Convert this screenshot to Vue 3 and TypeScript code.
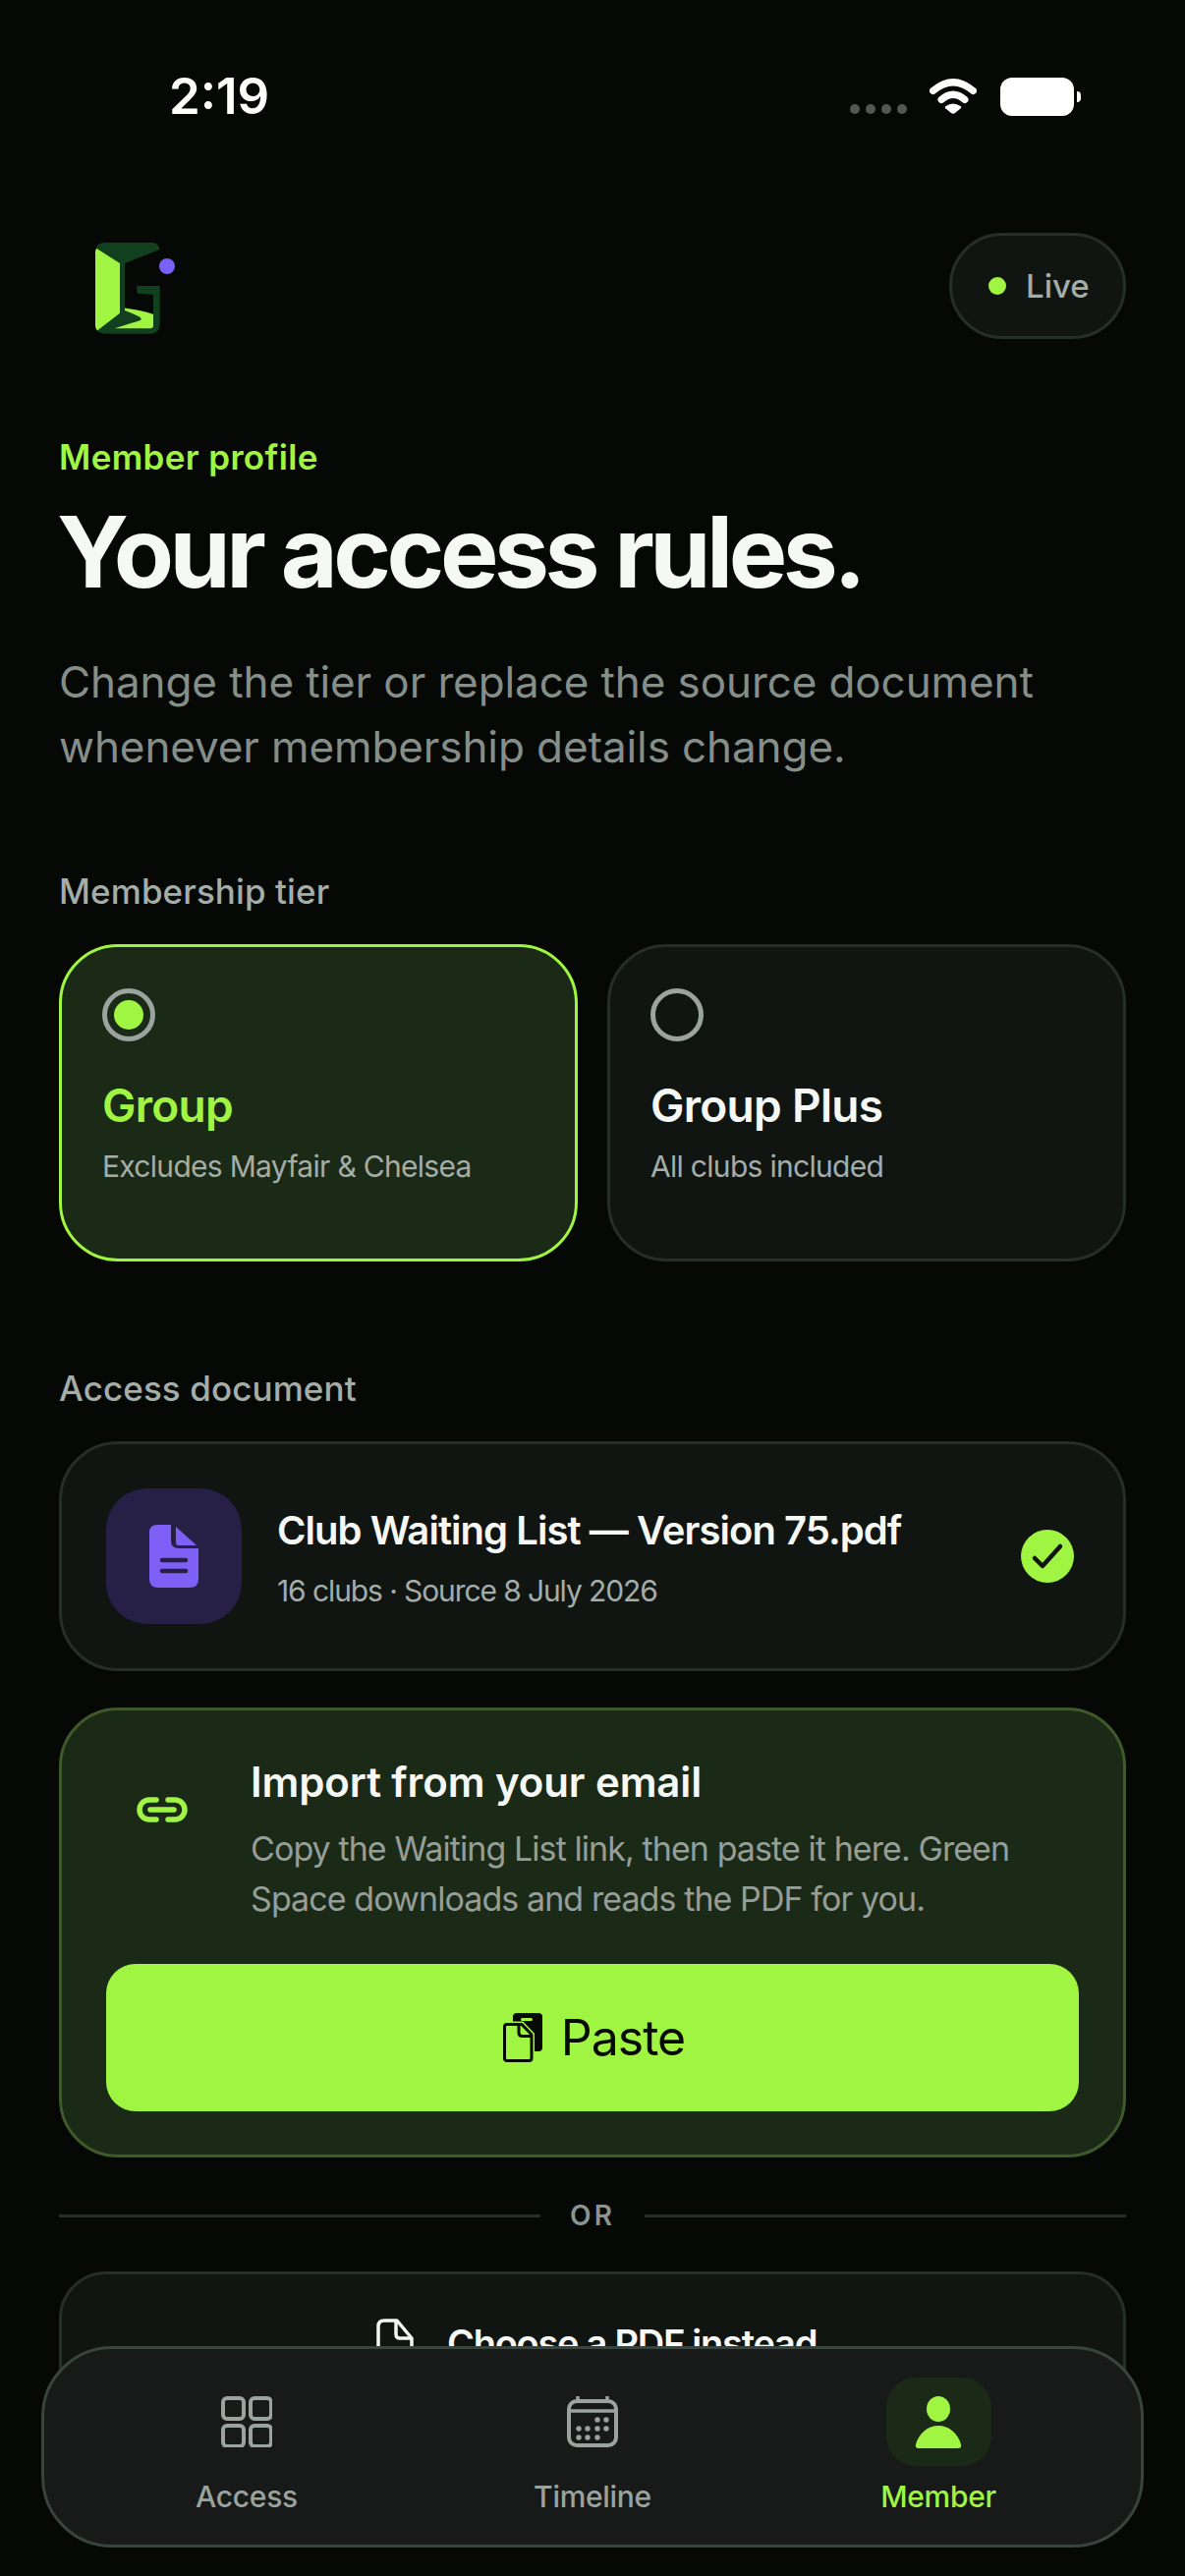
<script setup lang="ts">
const tiers: { name: string; note: string; active: boolean }[] = [
  { name: 'Group', note: 'Excludes Mayfair & Chelsea', active: true },
  { name: 'Group Plus', note: 'All clubs included', active: false },
]
const signalDots: number[] = [1, 2, 3, 4]
const calendarDots: [number, number][] = [
  [31, 24], [40, 24],
  [12, 33], [21, 33], [31, 33], [40, 33],
  [12, 42], [21, 42], [31, 42],
]
</script>

<template>
  <div class="page">
    <main class="content">
      <div class="status">
        <span class="time">2:19</span>
        <div class="status-right">
          <div class="signal"><i v-for="d in signalDots" :key="d"></i></div>
          <svg class="wifi" width="48" height="37" viewBox="0 0 48 37">
            <path d="M3.5 13.5Q24-4 44.500 13.500" fill="none" stroke="#fff" stroke-width="7" stroke-linecap="round" />
            <path d="M12 22.500Q24 12 36 22.500" fill="none" stroke="#fff" stroke-width="7" stroke-linecap="round" />
            <path d="M22 36L16.500 31.500Q15 30 16.500 29Q24 24 31.500 29Q33 30 31.500 31.500L26 36Q24 37.500 22 36Z" fill="#fff" />
          </svg>
          <div class="battery"><b></b></div>
        </div>
      </div>

      <header class="brand-row">
        <svg class="logo" width="82" height="93" viewBox="0 0 82 93">
          <path d="M10 0H58Q64 0 65.700 7L30 21V66L59 72V53L42.300 51.500V44H65.700V83Q65.700 92.700 56 92.700H10Q0 92.700 0 83V10Q0 0 10 0Z" fill="#12401f" />
          <path d="M1.500 6L25 21V71.700L2 89.500Q0 88 0 84V9Q0 7 1.500 6Z" fill="#a0f542" />
          <path d="M30 66.700Q45 68 59 73V84Q59 87.300 56 87.300H19.700Q36 82 46 79Q48 77 44 75Q38 72 30 69Z" fill="#a0f542" />
          <circle cx="73" cy="24" r="8" fill="#7c5ff5" />
        </svg>
        <div class="live"><i></i><span>Live</span></div>
      </header>

      <p class="eyebrow">Member profile</p>
      <h1 class="title">Your access rules.</h1>
      <p class="lede">Change the tier or replace the source document<br />whenever membership details change.</p>

      <p class="label tier-label">Membership tier</p>
      <div class="tiers">
        <div v-for="t in tiers" :key="t.name" class="tier" :class="{ on: t.active }">
          <span class="radio"><i v-if="t.active"></i></span>
          <strong>{{ t.name }}</strong>
          <small>{{ t.note }}</small>
        </div>
      </div>

      <p class="label doc-label">Access document</p>
      <div class="doc">
        <div class="doc-tile">
          <svg width="50" height="64" viewBox="0 0 50 64">
            <path d="M8 0H22V16Q22 24 30 24H50V55Q50 64 41 64H9Q0 64 0 55V8Q0 0 8 0Z" fill="#7f60f7" />
            <path d="M27 2L48 21H30Q27 21 27 18Z" fill="#7f60f7" />
            <path d="M13 36H37M13 47H37" stroke="#262047" stroke-width="4.500" stroke-linecap="round" />
          </svg>
        </div>
        <div class="doc-text">
          <strong>Club Waiting List — Version 75.pdf</strong>
          <small>16 clubs · Source 8 July 2026</small>
        </div>
        <svg class="check" width="54" height="54" viewBox="0 0 54 54">
          <circle cx="27" cy="27" r="27" fill="#a0f542" />
          <path d="M14 29L22 37L40 17" fill="none" stroke="#10150f" stroke-width="4.500" stroke-linecap="round" stroke-linejoin="round" />
        </svg>
      </div>

      <section class="import">
        <div class="import-top">
          <svg class="link" width="52" height="26" viewBox="0 0 52 26">
            <path d="M20 3H13A10 10 0 0 0 13 23H20M32 3H39A10 10 0 0 1 39 23H32" fill="none" stroke="#a0f542" stroke-width="5.500" stroke-linecap="round" />
            <path d="M14 13H38" stroke="#a0f542" stroke-width="5.500" stroke-linecap="round" />
          </svg>
          <div>
            <h2>Import from your email</h2>
            <p>Copy the Waiting List link, then paste it here. Green<br />Space downloads and reads the PDF for you.</p>
          </div>
        </div>
        <button class="paste" type="button">
          <svg width="40" height="50" viewBox="0 0 40 50">
            <rect x="10" y="0" width="30" height="39" rx="4" fill="#060a04" />
            <rect x="18" y="5" width="12" height="3" rx="1.500" fill="#a0f542" />
            <path d="M4 11.500H19L29 22V46Q29 48.500 26.500 48.500H4Q1.500 48.500 1.500 46V14Q1.500 11.500 4 11.500Z" fill="#a0f542" stroke="#a0f542" stroke-width="6" />
            <path d="M4 11.500H19L29 22V46Q29 48.500 26.500 48.500H4Q1.500 48.500 1.500 46V14Q1.500 11.500 4 11.500Z" fill="#a0f542" stroke="#060a04" stroke-width="3" stroke-linejoin="round" />
            <path d="M16 11.500V20Q16 23.500 19.500 23.500H29" fill="none" stroke="#060a04" stroke-width="3" />
          </svg>
          <span>Paste</span>
        </button>
      </section>

      <div class="or"><i></i><span>OR</span><i></i></div>

      <button class="choose" type="button">
        <svg width="38" height="50" viewBox="0 0 38 50">
          <path d="M8 2H21L36 20V42Q36 48 30 48H8Q2 48 2 42V8Q2 2 8 2Z" fill="none" stroke="#f4f6f3" stroke-width="3.500" stroke-linejoin="round" />
          <path d="M20 2V16Q20 20 24 20H36" fill="none" stroke="#f4f6f3" stroke-width="3.500" />
        </svg>
        <span>Choose a PDF instead</span>
      </button>
    </main>

    <nav class="tabbar">
      <div class="tab">
        <span class="tab-icon">
          <svg width="52" height="52" viewBox="0 0 52 52" fill="none" stroke="#9aa39e" stroke-width="4">
            <rect x="2" y="2" width="21" height="21" rx="4" />
            <rect x="30" y="2" width="21" height="21" rx="4" />
            <rect x="2" y="30" width="21" height="21" rx="4" />
            <rect x="30" y="30" width="21" height="21" rx="4" />
          </svg>
        </span>
        <span class="tab-label">Access</span>
      </div>
      <div class="tab">
        <span class="tab-icon">
          <svg width="52" height="52" viewBox="0 0 52 52" fill="none" stroke="#9aa39e" stroke-width="4">
            <rect x="2" y="5" width="48" height="45" rx="8" />
            <path d="M2 15H50M11 0V5M41 0V5" stroke-width="3.500" />
            <circle v-for="(c, i) in calendarDots" :key="i" :cx="c[0]" :cy="c[1]" r="2.700" fill="#9aa39e" stroke="none" />
          </svg>
        </span>
        <span class="tab-label">Timeline</span>
      </div>
      <div class="tab on">
        <span class="tab-icon">
          <svg width="48" height="53" viewBox="0 0 48 53" fill="#a0f542">
            <ellipse cx="24" cy="13" rx="12" ry="13" />
            <path d="M4 53Q0 53 1 49C4 38 13 30 24 30S44 38 47 49Q48 53 44 53Z" />
          </svg>
        </span>
        <span class="tab-label">Member</span>
      </div>
    </nav>
  </div>
</template>

<style>
html, body { margin: 0; background: #050805; }
</style>

<style scoped>
* { box-sizing: border-box; }
.page {
  position: relative;
  width: 1206px;
  height: 2622px;
  overflow: hidden;
  background: #050805;
  color: #f6f8f5;
  font-family: Inter, "Noto Sans", sans-serif;
}
.content { padding: 0 60px; display: flex; flex-direction: column; }
p, h1, h2 { margin: 0; }

.status { height: 237px; position: relative; display: flex; justify-content: space-between; align-items: flex-start; padding-top: 70px; }
.time { font-size: 51px; line-height: 56px; font-weight: 600; margin-left: 112px; color: #fff; }
.status-right { display: flex; align-items: flex-start; margin-top: 9px; margin-right: 53px; }
.signal { display: flex; gap: 6px; margin-top: 27px; margin-right: 23px; }
.signal i { width: 10px; height: 10px; border-radius: 50%; background: #555; }
.wifi { display: block; margin-right: 24px; }
.battery { position: relative; width: 75px; height: 39px; border-radius: 12px; background: #fff; }
.battery b { position: absolute; right: -7px; top: 14px; width: 4px; height: 11px; border-radius: 0 4px 4px 0; background: #fff; }

.brand-row { height: 108px; display: flex; justify-content: space-between; align-items: flex-start; }
.logo { display: block; margin: 10px 0 0 37px; }
.live { width: 180px; height: 108px; border-radius: 54px; border: 3px solid #262e2a; background: #101512; display: flex; align-items: center; padding-left: 37px; gap: 20px; }
.live i { width: 18px; height: 18px; border-radius: 50%; background: #a0f542; }
.live span { font-size: 33px; font-weight: 500; color: #a4ada8; }

.eyebrow { margin-top: 96px; font-size: 35px; line-height: 48px; font-weight: 600; color: #a0f542; letter-spacing: 0.35px; }
.title { margin-top: 18px; margin-left: -2px; font-size: 100px; line-height: 110px; font-weight: 700; letter-spacing: -4.5px; color: #f6f8f5; }
.lede { margin-top: 44px; font-size: 44px; line-height: 66px; color: #858e89; letter-spacing: -0.1px; }
.label { font-size: 35px; line-height: 48px; font-weight: 500; color: #a4ada8; letter-spacing: 0.1px; }
.tier-label { margin-top: 90px; }
.doc-label { margin-top: 105px; }

.tiers { margin-top: 30px; display: grid; grid-template-columns: 528px 528px; gap: 30px; }
.tier { height: 323px; border-radius: 60px; border: 3px solid #262e2a; background: #101512; padding: 42px 42px 0 41px; display: flex; flex-direction: column; }
.tier.on { background: #1b2a17; border-color: #a0f542; }
.radio { width: 54px; height: 54px; border-radius: 50%; border: 5px solid #9aa39e; display: flex; align-items: center; justify-content: center; }
.radio i { width: 30px; height: 30px; border-radius: 50%; background: #a0f542; }
.tier strong { margin-top: 35px; font-size: 46px; line-height: 60px; font-weight: 600; letter-spacing: -0.7px; }
.tier.on strong { color: #a0f542; }
.tier small { margin-top: 10px; font-size: 30px; line-height: 44px; color: #a4ada8; letter-spacing: -0.7px; }

.doc { margin-top: 30px; height: 234px; border-radius: 60px; border: 3px solid #262e2a; background: #101512; display: flex; align-items: center; padding: 0 50px 0 45px; }
.doc-tile { width: 138px; height: 138px; border-radius: 42px; background: #262047; display: flex; align-items: center; justify-content: center; flex: none; }
.doc-text { margin-left: 36px; flex: 1; display: flex; flex-direction: column; }
.doc-text strong { margin-top: 4px; font-size: 40px; line-height: 54px; font-weight: 600; letter-spacing: -0.95px; }
.doc-text small { margin-top: 12px; font-size: 30px; line-height: 44px; color: #a4ada8; letter-spacing: -1.1px; }
.check { flex: none; }

.import { margin-top: 37px; height: 458px; border-radius: 60px; border: 3px solid #3f5a2a; background: #1b2a17; padding: 45px 45px 0; }
.import-top { display: flex; height: 213px; }
.link { flex: none; margin: 43px 0 0 31px; }
.import-top > div { margin-left: 64px; }
.import h2 { font-size: 42px; line-height: 56px; font-weight: 600; letter-spacing: -0.1px; }
.import p { margin-top: 14px; font-size: 34px; line-height: 51px; color: #959e98; letter-spacing: -0.92px; }
.paste { width: 990px; height: 150px; border: 0; border-radius: 30px; background: #a0f542; display: flex; align-items: center; justify-content: center; gap: 19px; color: #060a04; font-family: inherit; font-size: 50px; letter-spacing: -1px; font-weight: 400; padding: 0 0 0 3px; }

.or { margin-top: 35px; height: 48px; display: flex; align-items: center; gap: 30px; }
.or i { flex: 1; height: 3px; background: #262e2a; }
.or span { font-size: 28px; font-weight: 600; letter-spacing: 3px; color: #8b948f; }

.choose { margin-top: 33px; height: 160px; width: 1086px; border-radius: 48px; border: 3px solid #262e2a; background: #101512; display: flex; align-items: flex-start; justify-content: center; gap: 34px; padding-top: 45px; padding-left: 14px; color: #f6f8f5; font-family: inherit; font-size: 38px; font-weight: 600; letter-spacing: -1.25px; }
.choose span { margin-top: 2px; }

.tabbar { position: absolute; left: 42px; top: 2388px; width: 1122px; height: 205px; border-radius: 72px; border: 3px solid #39443e; background: #171a18; display: grid; grid-template-columns: repeat(3, 352px); padding: 29px 30px 0; }
.tab { display: flex; flex-direction: column; align-items: center; }
.tab-icon { width: 107px; height: 90px; border-radius: 30px; display: flex; align-items: center; justify-content: center; }
.tab.on .tab-icon { background: #1b2a17; }
.tab-label { margin-top: 9px; font-size: 30px; line-height: 44px; font-weight: 500; color: #9aa39e; letter-spacing: -0.3px; }
.tab.on .tab-label { color: #a0f542; }
</style>
